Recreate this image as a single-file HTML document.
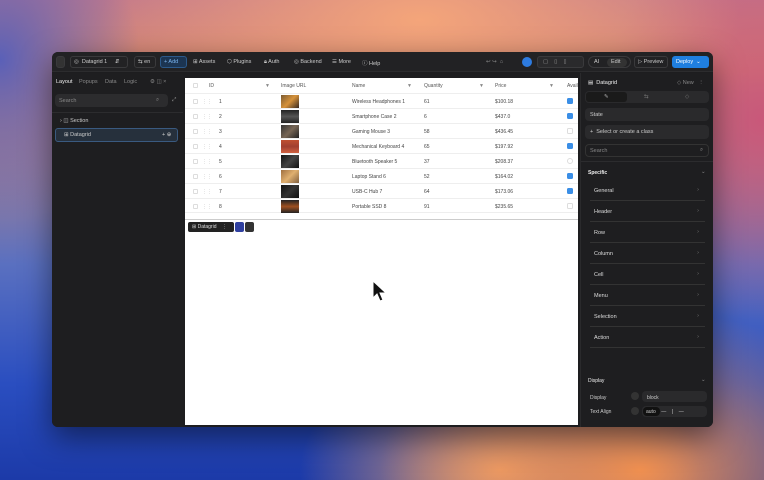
<!DOCTYPE html>
<html><head><style>
*{margin:0;padding:0;box-sizing:border-box}
body{width:764px;height:480px;overflow:hidden;position:relative;font-family:"Liberation Sans",sans-serif;font-size:6px;color:#ddd;
background:
radial-gradient(ellipse 140px 160px at 0px 60px,#5a60b8 0%,rgba(90,96,184,0) 100%),
radial-gradient(ellipse 320px 140px at 420px 20px,#f4a57a 0%,rgba(240,150,110,0) 100%),
radial-gradient(ellipse 260px 160px at 640px 470px,#f09050 0%,rgba(240,144,80,0) 100%),
radial-gradient(ellipse 200px 120px at 500px 470px,#e8a070 0%,rgba(232,160,112,0) 100%),
radial-gradient(ellipse 160px 200px at 760px 120px,#c9587a 0%,rgba(201,88,122,0) 100%),
linear-gradient(180deg,#c47a8a 0%,#d98a70 15%,#5a70c0 55%,#2a4ec0 80%,#1c3aa8 100%);}
.win{position:absolute;left:52px;top:52px;width:661px;height:375px;background:#1d1d1f;border-radius:6px;overflow:hidden;box-shadow:0 10px 30px rgba(0,0,0,.5)}
.top{position:absolute;left:0;top:0;width:100%;height:20px;background:#222224;border-bottom:1px solid #2c2c2e}
.t{position:absolute;top:7px;color:#ccc;font-size:5.5px;white-space:nowrap}
.pill{position:absolute;top:4px;height:12px;border:1px solid #3a3a3c;border-radius:3px}
.left{position:absolute;left:0;top:21px;width:131px;bottom:0;background:#1e1e20}
.canvas{position:absolute;left:133px;top:26px;width:393px;height:347px;background:#fff}
.right{position:absolute;left:528px;top:21px;right:0;bottom:0;background:#1e1e20;border-left:1px solid #2a2a2c}
.row{position:absolute;left:0;width:393px;height:15px;border-bottom:1px solid #eee;color:#444;font-size:5px}
.row span{position:absolute;top:5px}
.img{position:absolute;left:96px;top:1px;width:18px;height:13px}
.cb{position:absolute;left:382px;top:4px;width:6px;height:6px;border-radius:1.5px;background:#3a8ee6}
.cbe{position:absolute;left:382px;top:4px;width:6px;height:6px;border-radius:1.5px;border:1px solid #ddd}
.ck{position:absolute;left:8px;top:5px;width:5px;height:5px;border:1px solid #ddd;border-radius:1px}
.item{position:absolute;left:9px;width:115px;height:21px;border-bottom:1px solid #333;color:#ddd;font-size:5.5px}
.item span{position:absolute;left:4px;top:8px}
.item i{position:absolute;right:6px;top:7px;font-style:normal;color:#777}
.box{position:absolute;left:4px;width:124px;background:#2a2a2c;border-radius:4px}
</style></head><body>
<div class="win">
 <div class="top">
  <div class="pill" style="left:4px;width:9px;background:#333"></div>
  <div class="pill" style="left:18px;width:58px"></div><span class="t" style="left:22px">◎ &nbsp;Datagrid 1 &nbsp;&nbsp;&nbsp;&nbsp;⇵</span>
  <div class="pill" style="left:82px;width:22px"></div><span class="t" style="left:86px">⇆ en</span>
  <div class="pill" style="left:108px;width:27px;background:#1c3552;border-color:#2c5a8c"></div><span class="t" style="left:112px;color:#7ab4f0">+ Add</span>
  <span class="t" style="left:141px">⊞ Assets</span>
  <span class="t" style="left:175px">⬡ Plugins</span>
  <span class="t" style="left:212px">🔒︎ Auth</span>
  <span class="t" style="left:242px">◎ Backend</span>
  <span class="t" style="left:280px">☰ More</span>
  <span class="t" style="left:310px">ⓘ Help</span>
  <span class="t" style="left:434px;color:#888">↩ ↪ &nbsp;⌂</span>
  <div style="position:absolute;left:470px;top:5px;width:10px;height:10px;border-radius:50%;background:#2d7be0"></div>
  <div class="pill" style="left:485px;width:47px;background:#2a2a2c"></div>
  <span class="t" style="left:491px;color:#999">▢ &nbsp;&nbsp;&nbsp;▯ &nbsp;&nbsp;&nbsp;▯</span>
  <div class="pill" style="left:536px;width:43px;border-radius:6px"></div><span class="t" style="left:542px">AI</span>
  <div style="position:absolute;left:555px;top:6px;width:20px;height:9px;border-radius:5px;background:#333"></div><span class="t" style="left:559px">Edit</span>
  <div class="pill" style="left:582px;width:34px"></div><span class="t" style="left:586px">▷ Preview</span>
  <div class="pill" style="left:620px;width:37px;background:#1f7fe0;border-color:#1f7fe0"></div><span class="t" style="left:624px;color:#fff">Deploy &nbsp;⌄</span>
 </div>
 <div class="left">
  <span class="t" style="left:4px;top:6px;color:#eee">Layout</span><span class="t" style="left:27px;top:6px;color:#888">Popups</span><span class="t" style="left:53px;top:6px;color:#888">Data</span><span class="t" style="left:72px;top:6px;color:#888">Logic</span>
  <span class="t" style="left:98px;top:6px;color:#888">⚙ ◫ ×</span>
  <div style="position:absolute;left:3px;top:21px;width:113px;height:13px;background:#2c2c2e;border-radius:4px"></div>
  <span class="t" style="left:7px;top:25px;color:#888">Search</span><span class="t" style="left:104px;top:24px;color:#888">⌕</span><span class="t" style="left:120px;top:24px;color:#888">⤢</span>
  <div style="position:absolute;left:0;top:39px;width:131px;height:1px;background:#2c2c2e"></div>
  <span class="t" style="left:8px;top:45px">› ◫ Section</span>
  <div style="position:absolute;left:3px;top:55px;width:123px;height:14px;background:#26303c;border:1px solid #3a5a80;border-radius:3px"></div>
  <span class="t" style="left:12px;top:59px">⊞ Datagrid</span><span class="t" style="left:110px;top:59px">+ ⊕</span>
 </div>
 <div class="canvas">
  <div class="row" style="top:0;height:16px;color:#555">
   <div class="ck"></div><span style="left:24px">ID</span><span style="left:80px;color:#888">▼</span>
   <span style="left:96px">Image URL</span><span style="left:167px">Name</span><span style="left:222px;color:#888">▼</span>
   <span style="left:239px">Quantity</span><span style="left:294px;color:#888">▼</span><span style="left:310px">Price</span><span style="left:364px;color:#888">▼</span><span style="left:382px">Avail</span>
  </div>
  <div class="row" style="top:16px"><div class="ck"></div><span style="left:17px;color:#aaa">⋮⋮</span><span style="left:34px">1</span><div class="img" style="background:linear-gradient(135deg,#7a5a30,#d6923a,#3a2a20)"></div><span style="left:167px">Wireless Headphones 1</span><span style="left:239px">61</span><span style="left:310px">$100.18</span><div class="cb"></div></div>
  <div class="row" style="top:31px"><div class="ck"></div><span style="left:17px;color:#aaa">⋮⋮</span><span style="left:34px">2</span><div class="img" style="background:linear-gradient(#222,#555,#222)"></div><span style="left:167px">Smartphone Case 2</span><span style="left:239px">6</span><span style="left:310px">$437.0</span><div class="cb"></div></div>
  <div class="row" style="top:46px"><div class="ck"></div><span style="left:17px;color:#aaa">⋮⋮</span><span style="left:34px">3</span><div class="img" style="background:linear-gradient(135deg,#333,#776655,#222)"></div><span style="left:167px">Gaming Mouse 3</span><span style="left:239px">58</span><span style="left:310px">$436.45</span><div class="cbe"></div></div>
  <div class="row" style="top:61px"><div class="ck"></div><span style="left:17px;color:#aaa">⋮⋮</span><span style="left:34px">4</span><div class="img" style="background:linear-gradient(#c05030,#a04030,#d06040)"></div><span style="left:167px">Mechanical Keyboard 4</span><span style="left:239px">65</span><span style="left:310px">$197.92</span><div class="cb"></div></div>
  <div class="row" style="top:76px"><div class="ck"></div><span style="left:17px;color:#aaa">⋮⋮</span><span style="left:34px">5</span><div class="img" style="background:linear-gradient(135deg,#111,#444,#111)"></div><span style="left:167px">Bluetooth Speaker 5</span><span style="left:239px">37</span><span style="left:310px">$208.37</span><div class="cbe" style="border-radius:50%"></div></div>
  <div class="row" style="top:91px"><div class="ck"></div><span style="left:17px;color:#aaa">⋮⋮</span><span style="left:34px">6</span><div class="img" style="background:linear-gradient(135deg,#a07040,#e0b070,#806040)"></div><span style="left:167px">Laptop Stand 6</span><span style="left:239px">52</span><span style="left:310px">$164.02</span><div class="cb"></div></div>
  <div class="row" style="top:106px"><div class="ck"></div><span style="left:17px;color:#aaa">⋮⋮</span><span style="left:34px">7</span><div class="img" style="background:linear-gradient(135deg,#111,#333,#111)"></div><span style="left:167px">USB-C Hub 7</span><span style="left:239px">64</span><span style="left:310px">$173.06</span><div class="cb"></div></div>
  <div class="row" style="top:121px;height:14px"><div class="ck"></div><span style="left:17px;color:#aaa">⋮⋮</span><span style="left:34px">8</span><div class="img" style="background:linear-gradient(#222,#a05020,#222)"></div><span style="left:167px">Portable SSD 8</span><span style="left:239px">91</span><span style="left:310px">$235.65</span><div class="cbe"></div></div>
  <div style="position:absolute;left:0;top:141px;width:393px;height:1px;background:#ccc"></div>
  <div style="position:absolute;left:3px;top:144px;width:46px;height:10px;background:#222;border-radius:2px"></div>
  <span class="t" style="left:7px;top:146px;font-size:5px;color:#ddd">⊞ Datagrid &nbsp;&nbsp;&nbsp;⋮</span>
  <div style="position:absolute;left:50px;top:144px;width:9px;height:10px;background:#3040a0;border-radius:2px"></div>
  <div style="position:absolute;left:60px;top:144px;width:9px;height:10px;background:#333;border-radius:2px"></div>
  <svg style="position:absolute;left:187px;top:202px" width="16" height="24" viewBox="0 0 16 24"><path d="M1 1 L1 18 L5 14 L8 21 L11 20 L8 13 L14 13 Z" fill="#111" stroke="#fff" stroke-width="1"/></svg>
 </div>
 <div class="right">
  <span class="t" style="left:7px;top:7px;color:#eee">▤ &nbsp;Datagrid</span><span class="t" style="left:96px;top:7px;color:#888">◇ New &nbsp;&nbsp;⋮</span>
  <div class="box" style="top:18px;height:12px"></div><div style="position:absolute;left:5px;top:19px;width:41px;height:10px;background:#1a1a1a;border-radius:3px"></div>
  <span class="t" style="left:23px;top:21px;color:#aaa">✎</span><span class="t" style="left:63px;top:21px;color:#777">⇆</span><span class="t" style="left:104px;top:21px;color:#777">◇</span>
  <div class="box" style="top:35px;height:13px"></div><span class="t" style="left:9px;top:39px">State</span>
  <div class="box" style="top:52px;height:14px"></div><span class="t" style="left:9px;top:56px">+ &nbsp;Select or create a class</span>
  <div style="position:absolute;left:4px;top:71px;width:124px;height:13px;border:1px solid #333;border-radius:4px"></div><span class="t" style="left:9px;top:75px;color:#888">Search</span><span class="t" style="left:119px;top:74px;color:#888">⌕</span>
  <div style="position:absolute;left:0;top:88px;width:100%;height:1px;background:#2c2c2e"></div>
  <span class="t" style="left:7px;top:97px;color:#eee;font-weight:bold;font-size:5px">Specific</span><span class="t" style="left:120px;top:96px;color:#888">⌄</span>
  <div class="item" style="top:107px"><span>General</span><i>›</i></div>
  <div class="item" style="top:128px"><span>Header</span><i>›</i></div>
  <div class="item" style="top:149px"><span>Row</span><i>›</i></div>
  <div class="item" style="top:170px"><span>Column</span><i>›</i></div>
  <div class="item" style="top:191px"><span>Cell</span><i>›</i></div>
  <div class="item" style="top:212px"><span>Menu</span><i>›</i></div>
  <div class="item" style="top:233px"><span>Selection</span><i>›</i></div>
  <div class="item" style="top:254px"><span>Action</span><i>›</i></div>
  <span class="t" style="left:7px;top:305px;color:#eee;font-size:5px">Display</span><span class="t" style="left:120px;top:304px;color:#888">⌄</span>
  <span class="t" style="left:9px;top:322px;font-size:5px">Display</span><div style="position:absolute;left:50px;top:319px;width:8px;height:8px;border-radius:50%;background:#333"></div>
  <div class="box" style="left:61px;top:318px;width:65px;height:11px"></div><span class="t" style="left:66px;top:322px;font-size:5px">block</span>
  <span class="t" style="left:9px;top:336px;font-size:5px">Text Align</span><div style="position:absolute;left:50px;top:334px;width:8px;height:8px;border-radius:50%;background:#333"></div>
  <div class="box" style="left:61px;top:333px;width:65px;height:11px"></div><div style="position:absolute;left:62px;top:334px;width:17px;height:9px;background:#111;border-radius:4px"></div><span class="t" style="left:65px;top:336px;font-size:5px">auto &nbsp;&nbsp;&nbsp;— &nbsp;&nbsp;&nbsp;| &nbsp;&nbsp;&nbsp;—</span>
 </div>
</div>
</body></html>
